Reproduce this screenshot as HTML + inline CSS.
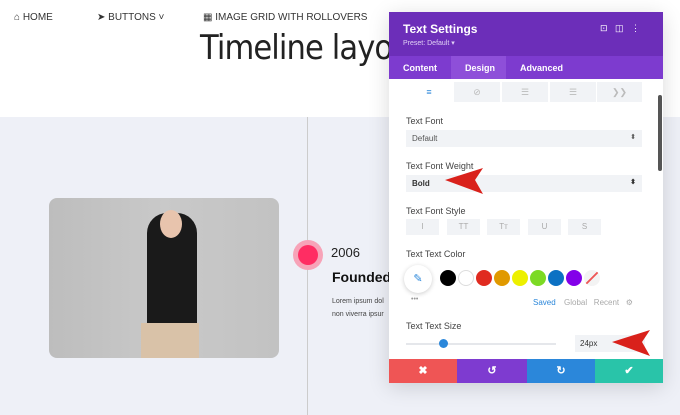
<!DOCTYPE html><html><head><style>
*{margin:0;padding:0;box-sizing:border-box}
body{width:680px;height:415px;overflow:hidden;position:relative;font-family:"Liberation Sans",sans-serif;background:#eef0f7}
.top{position:absolute;left:0;top:0;width:680px;height:117px;background:#fff}
.nav{position:absolute;top:12px;font-size:10px;color:#333}
.abs{position:absolute}
.panel{position:absolute;left:389px;top:12px;width:274px;height:371px;background:#fff;box-shadow:0 4px 20px rgba(0,0,0,.15);overflow:hidden}
.lbl{position:absolute;left:17px;font-size:9px;color:#444}
.sel{position:absolute;left:17px;width:236px;height:17px;background:#f1f3f6;font-size:8px;color:#555;padding:4px 6px}
.sel:after{content:"⬍";position:absolute;right:6px;top:3px;font-size:7px}
.dot{position:absolute;top:258px;width:16px;height:16px;border-radius:50%}
.btn{position:absolute;top:347px;height:24px;color:#fff;font-size:11px;text-align:center;line-height:24px;font-weight:bold}
.fs{position:absolute;top:207px;width:33px;height:16px;background:#f1f3f6;font-size:8px;color:#aaa;text-align:center;line-height:16px}
.ti{position:absolute;top:70px;width:46px;height:20px;background:#f1f3f6;color:#bbb;font-size:9px;text-align:center;line-height:20px}
</style></head><body>
<div class="top"></div>
<div class="nav" style="left:14px">⌂ HOME</div>
<div class="nav" style="left:97px">➤ BUTTONS ˅</div>
<div class="nav" style="left:203px">▦ IMAGE GRID WITH ROLLOVERS</div>
<div class="abs" style="left:200px;top:28px;font-size:34px;color:#222;font-weight:normal;font-family:'DejaVu Sans',sans-serif;letter-spacing:-1px;transform:scaleX(.9);transform-origin:left">Timeline layout</div>
<div class="abs" style="left:307px;top:117px;width:1px;height:298px;background:#ccc"></div>
<div class="abs" style="left:49px;top:198px;width:230px;height:160px;border-radius:8px;background:linear-gradient(90deg,#bdbdbd,#c9c9c9 50%,#c2c2c2)">
<div class="abs" style="left:98px;top:15px;width:50px;height:145px;background:#1a1a1a;border-radius:20px 20px 0 0"></div>
<div class="abs" style="left:92px;top:125px;width:58px;height:35px;background:#d9c2a8"></div>
<div class="abs" style="left:111px;top:12px;width:22px;height:28px;background:#e8c4ad;border-radius:50%"></div>
</div>
<div class="abs" style="left:293px;top:240px;width:30px;height:30px;border-radius:50%;background:#f7a3b8"></div>
<div class="abs" style="left:298px;top:245px;width:20px;height:20px;border-radius:50%;background:#ff2d63"></div>
<div class="abs" style="left:331px;top:245px;font-size:13px;color:#222">2006</div>
<div class="abs" style="left:332px;top:269px;font-size:14px;font-weight:bold;color:#111">Founded</div>
<div class="abs" style="left:332px;top:295px;font-size:7px;color:#444;line-height:13px">Lorem ipsum dol<br>non viverra ipsur</div>
<div class="panel">
<div class="abs" style="left:0;top:0;width:274px;height:44px;background:#6c2eb9"></div>
<div class="abs" style="left:14px;top:10px;color:#fff;font-size:12px;font-weight:bold">Text Settings</div>
<div class="abs" style="left:14px;top:27px;color:#e0d0f5;font-size:7px">Preset: Default ▾</div>
<div class="abs" style="left:211px;top:11px;color:#fff;font-size:9px">⊡ &nbsp;&nbsp;◫ &nbsp;&nbsp;⋮</div>
<div class="abs" style="left:0;top:44px;width:274px;height:23px;background:#7d3bcf"></div>
<div class="abs" style="left:62px;top:44px;width:55px;height:23px;background:#8e4fd9"></div>
<div class="abs" style="left:14px;top:51px;color:#fff;font-size:9px;font-weight:bold">Content</div>
<div class="abs" style="left:76px;top:51px;color:#fff;font-size:9px;font-weight:bold">Design</div>
<div class="abs" style="left:131px;top:51px;color:#fff;font-size:9px;font-weight:bold">Advanced</div>
<div class="ti" style="left:17px;background:#fff;color:#2b87da">≡</div>
<div class="ti" style="left:65px">⊘</div>
<div class="ti" style="left:113px">☰</div>
<div class="ti" style="left:161px">☰</div>
<div class="ti" style="left:208px;width:45px">❯❯</div>
<div class="abs" style="left:269px;top:83px;width:4px;height:76px;background:#555;border-radius:2px"></div>
<div class="lbl" style="top:104px">Text Font</div>
<div class="sel" style="top:118px">Default</div>
<div class="lbl" style="top:149px">Text Font Weight</div>
<div class="sel" style="top:163px;font-weight:bold;color:#333">Bold</div>
<div class="lbl" style="top:194px">Text Font Style</div>
<div class="fs" style="left:17px">I</div><div class="fs" style="left:58px">TT</div><div class="fs" style="left:98px">Tт</div><div class="fs" style="left:139px">U</div><div class="fs" style="left:179px">S</div>
<div class="lbl" style="top:237px">Text Text Color</div>
<div class="abs" style="left:15px;top:253px;width:28px;height:28px;border-radius:50%;background:#fff;box-shadow:0 1px 5px rgba(0,0,0,.2);color:#2b87da;font-size:11px;text-align:center;line-height:28px">✎</div>
<div class="dot" style="left:51px;background:#000"></div>
<div class="dot" style="left:69px;background:#fff;border:1px solid #ddd"></div>
<div class="dot" style="left:87px;background:#e02b20"></div>
<div class="dot" style="left:105px;background:#e09900"></div>
<div class="dot" style="left:123px;background:#edf000"></div>
<div class="dot" style="left:141px;background:#7cda24"></div>
<div class="dot" style="left:159px;background:#0c71c3"></div>
<div class="dot" style="left:177px;background:#8300e9"></div>
<div class="dot" style="left:195px;background:linear-gradient(135deg,#f3f3f3 45%,#e55 47%,#e55 53%,#f3f3f3 55%)"></div>
<div class="abs" style="left:22px;top:284px;font-size:7px;color:#999">•••</div>
<div class="abs" style="left:144px;top:286px;font-size:8px;color:#2b87da">Saved</div>
<div class="abs" style="left:175px;top:286px;font-size:8px;color:#aaa">Global &nbsp; Recent &nbsp; ⚙</div>
<div class="lbl" style="top:309px">Text Text Size</div>
<div class="abs" style="left:17px;top:331px;width:150px;height:2px;background:#e5e7eb"></div>
<div class="abs" style="left:50px;top:327px;width:9px;height:9px;border-radius:50%;background:#2b87da"></div>
<div class="abs" style="left:186px;top:323px;width:70px;height:17px;background:#f1f3f6;font-size:8px;color:#333;padding:4px 5px">24px</div>
<div class="btn" style="left:0;width:68px;background:#ef5555">✖</div>
<div class="btn" style="left:68px;width:70px;background:#7e3bd0">↺</div>
<div class="btn" style="left:138px;width:68px;background:#2b87da">↻</div>
<div class="btn" style="left:206px;width:68px;background:#29c4a9">✔</div>
</div>
<svg class="abs" style="left:445px;top:166px" width="40" height="30"><polygon points="0,14 38,2 30,14 38,28" fill="#d9211b"/></svg>
<svg class="abs" style="left:612px;top:328px" width="40" height="30"><polygon points="0,14 38,2 30,14 38,28" fill="#d9211b"/></svg>
</body></html>
